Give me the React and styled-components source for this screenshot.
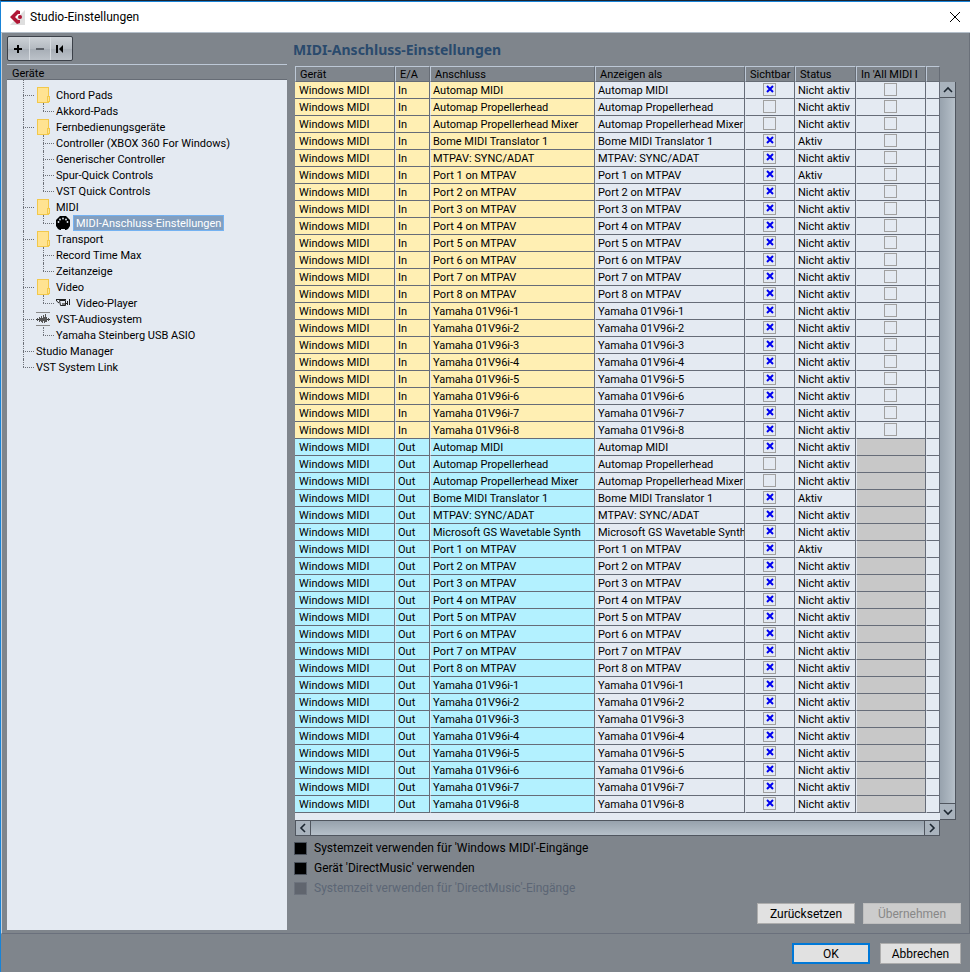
import React, { useState } from "react";
import styled, { createGlobalStyle, css } from "styled-components";

const GlobalStyle = createGlobalStyle`
    * {
        box-sizing: border-box;
    }

    body {
        margin: 0;
        font-family: Roboto, "Open Sans", sans-serif;
        font-size: 11px;
        color: #000;
        background: #7f858c;
    }
`;

const Window = styled.div`
    min-height: 100vh;
    display: flex;
    flex-direction: column;
    border-left: 1px solid #1883d7;
    border-top: 1px solid #1a2432;
    background: #7f858c;
`;

const TitleBar = styled.header`
    height: 32px;
    padding: 0 8px;
    display: flex;
    align-items: center;
    gap: 5px;
    background: #fff;
    border-top: 1px solid #1883d7;
    border-bottom: 1px solid #b4bfca;
`;

const WindowTitle = styled.h1`
    flex: 1;
    margin: 0;
    font-size: 12px;
    font-weight: 400;
`;

const CloseButton = styled.button`
    width: 14px;
    height: 14px;
    padding: 0;
    display: flex;
    align-items: center;
    justify-content: center;
    border: 0;
    background: none;
`;

const Main = styled.main`
    flex: 1;
    display: flex;
    gap: 6px;
    padding: 3px 8px 3px 5px;
    border-left: 1px solid #c3ccd6;
    border-right: 1px solid #6a7079;
    border-bottom: 1px solid #6a707c;
`;

const Sidebar = styled.section`
    width: 280px;
    flex: none;
    display: flex;
    flex-direction: column;
`;

const Toolbar = styled.div`
    width: 66px;
    height: 25px;
    margin-bottom: 3px;
    display: flex;
    border: 1px solid #3c4149;
    border-radius: 2px;
    background: linear-gradient(#cdd2d7, #b4bac1 50%, #a6adb5 51%, #bcc2c9);
`;

const ToolButton = styled.button`
    flex: 1;
    padding: 0;
    display: flex;
    align-items: center;
    justify-content: center;
    border: 0;
    background: none;

    & + & {
        border-left: 1px solid #d6dbe0;
    }
`;

const SidebarHeader = styled.h2`
    height: 16px;
    margin: 0;
    padding: 0 5px;
    font-size: 11px;
    font-weight: 400;
    line-height: 18px;
    border-top: 1px solid #bdc8d6;
    border-bottom: 1px solid #666c75;
`;

const Tree = styled.ul`
    flex: 1;
    margin: 0;
    padding: 7px 0 0 16px;
    list-style: none;
    background: #e4eaf2;
`;

const SubTree = styled.ul`
    margin: 0;
    padding: 0 0 0 20px;
    list-style: none;
`;

/* dotted guide lines: the vertical one stops at the row of the last child */
const TreeItem = styled.li`
    position: relative;

    &::before {
        content: "";
        position: absolute;
        left: 0;
        top: ${(props) => (props.$first ? "-7px" : "0")};
        height: ${(props) => (props.$last ? "8px" : "auto")};
        bottom: ${(props) => (props.$last ? "auto" : "0")};
        border-left: 1px dotted #6c7078;
    }
`;

const TreeRow = styled.div`
    height: 16px;
    display: flex;
    align-items: center;

    &::before {
        content: "";
        width: 11px;
        margin-right: 2px;
        border-top: 1px dotted #6c7078;
    }
`;

const IconSlot = styled.span`
    width: 20px;
    height: 16px;
    display: flex;
    align-items: center;
`;

const TreeLabel = styled.span`
    height: 16px;
    line-height: 18px;
    white-space: nowrap;
    ${(props) =>
        props.$selected &&
        css`
            margin-left: -3px;
            padding: 0 2px;
            line-height: 16px;
            color: #fff;
            background: #829fc0;
            border: 1px solid #74b2f2;
        `}
`;

const Content = styled.section`
    flex: 1;
    min-width: 0;
    display: flex;
    flex-direction: column;
`;

const PageTitle = styled.h2`
    height: 30px;
    margin: 0;
    padding-top: 2px;
    font-family: "Noto Sans", "Open Sans", sans-serif;
    font-size: 14px;
    line-height: 24px;
    font-weight: 700;
    color: #2a4a6c;
`;

const ListFrame = styled.div`
    display: grid;
    grid-template-columns: 1fr 16px;
    margin: 0 5px 0 2px;
`;

const ListBody = styled.div`
    padding-bottom: 7px;
    background: #e4eaf2;
    overflow: hidden;
`;

const Table = styled.table`
    width: 100%;
    table-layout: fixed;
    border-collapse: separate;
    border-spacing: 0;
`;

const HeadCell = styled.th`
    height: 16px;
    padding: 2px 0 0 4px;
    overflow: hidden;
    text-align: left;
    font-weight: 400;
    line-height: 12px;
    white-space: nowrap;
    background: #7f858c;
    border-top: 1px solid #bdc8d6;
    border-left: 1px solid #bdc8d6;
    border-right: 1px solid #666c75;
    border-bottom: 1px solid #666c75;
`;

const tones = { In: "#ffefb3", Out: "#b3f1ff", plain: "#e4eaf2", off: "#c8c8c8" };

const Cell = styled.td`
    height: 17px;
    padding: ${(props) => (props.$center ? "0 1px 0 0" : "2px 0 0 2px")};
    overflow: hidden;
    line-height: 14px;
    white-space: nowrap;
    text-align: ${(props) => (props.$center ? "center" : "left")};
    background: ${(props) => tones[props.$tone || "plain"]};
    border-left: 1px solid ${(props) => (props.$tone ? "#e4eaf2" : "transparent")};
    border-right: 1px solid #666c78;
    border-bottom: 1px solid #666c78;

    &:first-child {
        border-left: 0;
        padding-left: 4px;
    }
`;

const Box = styled.input`
    appearance: none;
    display: block;
    width: 13px;
    height: 13px;
    margin: 0 auto 2px;
    border: 1px solid #a0a0a0;
    background: #e4eaf2;
`;

const BoxWrap = styled.span`
    position: relative;
    display: block;

    svg {
        position: absolute;
        left: calc(50% - 4px);
        top: 2px;
        pointer-events: none;
    }
`;

const VScroll = styled.div`
    margin-top: 16px;
    display: flex;
    flex-direction: column;
    justify-content: space-between;
    background: linear-gradient(90deg, #97a2ad, #b6c0c9);
    border-right: 1px solid #50565f;
    border-bottom: 1px solid #50565f;
`;

const HScroll = styled.div`
    height: 16px;
    display: flex;
    justify-content: space-between;
    background: linear-gradient(#97a2ad, #b6c0c9);
    border: 1px solid #50565f;
`;

const ScrollButton = styled.button`
    width: 15px;
    height: ${(props) => (props.$side ? "14px" : "16px")};
    padding: 0;
    display: flex;
    align-items: center;
    justify-content: center;
    border: 0 solid #50565f;
    border-width: ${(props) => props.$edge};
    background: #a9b3bd;
`;

const Options = styled.div`
    padding: 2px 0 0 1px;
    display: flex;
    flex-direction: column;
`;

const Option = styled.label`
    height: 20px;
    display: flex;
    align-items: center;
    gap: 7px;
    font-size: 12px;
    color: ${(props) => (props.$disabled ? "#5c6675" : "#000")};
`;

const OptionBox = styled.input`
    appearance: none;
    width: 13px;
    height: 13px;
    margin: 0;
    border: 1px solid #4b525c;
    background: #000;

    &:disabled {
        border-color: #6d737d;
        background: #60656e;
    }
`;

const Actions = styled.div`
    margin-top: auto;
    padding-bottom: 6px;
    display: flex;
    justify-content: flex-end;
    gap: 8px;
`;

const Footer = styled.footer`
    height: 38px;
    padding: 9px 9px 0;
    display: flex;
    justify-content: flex-end;
    gap: 10px;
`;

const PushButton = styled.button`
    width: ${(props) => props.$width}px;
    height: 21px;
    padding: 2px 0 0;
    font: 12px/15px Roboto, "Open Sans", sans-serif;
    color: #000;
    background: #e1e1e1;
    border: ${(props) => (props.$primary ? "2px solid #0078d7" : "1px solid #adadad")};

    &:disabled {
        color: #888;
        background: #ccc;
        border-color: #bfbfbf;
    }
`;

function LogoIcon() {
    return (
        <svg width="16" height="16" viewBox="0 0 16 16">
            <path d="M1 16L16 1V16Z" fill="#dedede" />
            <path d="M1 8L8 1L11 2V5H9L6 8L9 11H11V14L8 15Z" fill="#b01635" />
            <circle cx="11" cy="8" r="2" fill="#b01635" />
        </svg>
    );
}

function FolderIcon() {
    return (
        <svg width="14" height="16" viewBox="0 0 14 16">
            <rect x="1.5" y=".5" width="11" height="15" fill="#ffe391" stroke="#f2c84b" />
            <rect x="11.5" y="9.5" width="2" height="5" fill="#ffe391" stroke="#f2c84b" />
        </svg>
    );
}

function MidiIcon() {
    return (
        <svg width="14" height="14" viewBox="0 0 14 14">
            <path d="M4 0H10L14 4V10L12 13L10 14H9V13H5V14H4L2 13L0 10V4Z" fill="#000" />
            <g fill="#e4eaf2">
                <circle cx="2.5" cy="6" r=".9" />
                <circle cx="4" cy="3.5" r=".9" />
                <circle cx="7" cy="2.5" r=".9" />
                <circle cx="10" cy="3.5" r=".9" />
                <circle cx="11.5" cy="6" r=".9" />
            </g>
        </svg>
    );
}

function CameraIcon() {
    return (
        <svg width="14" height="10" viewBox="0 0 14 10">
            <path d="M0 1.5H4M.5 1V3L3 5" fill="none" stroke="#222" />
            <path d="M3.5 2.5H9.5V7.5H4.5ZM4 1.5H10M10 5.5H11M11.5 3V7M13.5 1V7" fill="none" stroke="#222" />
            <path d="M6 5H9V7H6Z" fill="#777" />
        </svg>
    );
}

function WaveIcon() {
    return (
        <svg width="14" height="14" viewBox="0 0 14 14" stroke="#555">
            <path d="M0 .5H14M0 13.5H14" stroke="#888" />
            <path d="M0 7.5H14" stroke="#333" />
            <path d="M1.5 6V9M3.5 5V10M4.5 6V9M5.5 4V10M6.5 6V11M7.5 3V9M8.5 5V11M9.5 2V10M10.5 5V10M12.5 6V9" />
        </svg>
    );
}

function CheckMark() {
    return (
        <svg width="8" height="8" viewBox="0 0 8 8">
            <path d="M1 1L7 7M7 1L1 7" stroke="#0000f0" strokeWidth="2" />
        </svg>
    );
}

function Chevron({ d }) {
    return (
        <svg width="10" height="10" viewBox="0 0 10 10">
            <path d={d} fill="none" stroke="#1c2630" strokeWidth="1.6" />
        </svg>
    );
}

const icons = { folder: FolderIcon, midi: MidiIcon, camera: CameraIcon, wave: WaveIcon };

const devices = [
    { label: "Chord Pads", icon: "folder", children: [{ label: "Akkord-Pads" }] },
    {
        label: "Fernbedienungsgeräte",
        icon: "folder",
        children: [
            { label: "Controller (XBOX 360 For Windows)" },
            { label: "Generischer Controller" },
            { label: "Spur-Quick Controls" },
            { label: "VST Quick Controls" },
        ],
    },
    {
        label: "MIDI",
        icon: "folder",
        children: [{ label: "MIDI-Anschluss-Einstellungen", icon: "midi", selected: true }],
    },
    {
        label: "Transport",
        icon: "folder",
        children: [{ label: "Record Time Max" }, { label: "Zeitanzeige" }],
    },
    { label: "Video", icon: "folder", children: [{ label: "Video-Player", icon: "camera" }] },
    { label: "VST-Audiosystem", icon: "wave", children: [{ label: "Yamaha Steinberg USB ASIO" }] },
    { label: "Studio Manager" },
    { label: "VST System Link" },
];

const numbered = (count, name) => Array.from({ length: count }, (_, i) => name(i + 1));

const firstPorts = [
    "Automap MIDI",
    "Automap Propellerhead",
    "Automap Propellerhead Mixer",
    "Bome MIDI Translator 1",
    "MTPAV: SYNC/ADAT",
];
const lastPorts = [
    ...numbered(8, (n) => `Port ${n} on MTPAV`),
    ...numbered(8, (n) => `Yamaha 01V96i-${n}`),
];
const hidden = ["Automap Propellerhead", "Automap Propellerhead Mixer"];
const active = ["Bome MIDI Translator 1", "Port 1 on MTPAV"];

const toRow = (direction) => (name) => ({
    id: direction + name,
    direction,
    name,
    visible: !hidden.includes(name),
    status: active.includes(name) ? "Aktiv" : "Nicht aktiv",
});

const ports = [
    ...[...firstPorts, ...lastPorts].map(toRow("In")),
    ...[...firstPorts, "Microsoft GS Wavetable Synth", ...lastPorts].map(toRow("Out")),
];

const columns = [
    { title: "Gerät", width: 100 },
    { title: "E/A", width: 35 },
    { title: "Anschluss", width: 165 },
    { title: "Anzeigen als", width: 150 },
    { title: "Sichtbar", width: 50 },
    { title: "Status", width: 61 },
    { title: "In 'All MIDI I", width: 70 },
    { title: "" },
];

function TreeNode({ node, first, last }) {
    const Icon = icons[node.icon];
    return (
        <TreeItem $first={first} $last={last}>
            <TreeRow>
                {Icon && (
                    <IconSlot>
                        <Icon />
                    </IconSlot>
                )}
                <TreeLabel $selected={node.selected}>{node.label}</TreeLabel>
            </TreeRow>
            {node.children && (
                <SubTree>
                    {node.children.map((child, i) => (
                        <TreeNode key={child.label} node={child} last={i === node.children.length - 1} />
                    ))}
                </SubTree>
            )}
        </TreeItem>
    );
}

function TickBox({ label, checked, onChange }) {
    return (
        <BoxWrap>
            <Box type="checkbox" aria-label={label} checked={checked} onChange={onChange} />
            {checked && <CheckMark />}
        </BoxWrap>
    );
}

function PortRow({ port }) {
    const [visible, setVisible] = useState(port.visible);
    const [allInputs, setAllInputs] = useState(false);
    return (
        <tr>
            <Cell $tone={port.direction}>Windows MIDI</Cell>
            <Cell $tone={port.direction}>{port.direction}</Cell>
            <Cell $tone={port.direction}>{port.name}</Cell>
            <Cell>{port.name}</Cell>
            <Cell $center>
                <TickBox label="Sichtbar" checked={visible} onChange={() => setVisible(!visible)} />
            </Cell>
            <Cell>{port.status}</Cell>
            <Cell $center $tone={port.direction === "Out" ? "off" : undefined}>
                {port.direction === "In" && (
                    <TickBox
                        label="In 'All MIDI Inputs'"
                        checked={allInputs}
                        onChange={() => setAllInputs(!allInputs)}
                    />
                )}
            </Cell>
            <Cell />
        </tr>
    );
}

function App() {
    return (
        <>
            <GlobalStyle />
            <Window>
                <TitleBar>
                    <LogoIcon />
                    <WindowTitle>Studio-Einstellungen</WindowTitle>
                    <CloseButton aria-label="Schließen">
                        <svg width="12" height="12" viewBox="0 0 12 12">
                            <path d="M1 1L11 11M11 1L1 11" stroke="#000" />
                        </svg>
                    </CloseButton>
                </TitleBar>
                <Main>
                    <Sidebar>
                        <Toolbar>
                            <ToolButton aria-label="Hinzufügen">
                                <svg width="8" height="8" viewBox="0 0 8 8">
                                    <path d="M4 0V8M0 4H8" stroke="#000" strokeWidth="2" />
                                </svg>
                            </ToolButton>
                            <ToolButton aria-label="Entfernen">
                                <svg width="8" height="8" viewBox="0 0 8 8">
                                    <path d="M0 4H8" stroke="#5b6067" strokeWidth="2" />
                                </svg>
                            </ToolButton>
                            <ToolButton aria-label="Zurücksetzen">
                                <svg width="12" height="8" viewBox="0 0 12 8">
                                    <path d="M0 0H2V8H0ZM7 0V8L3 4Z" fill="#000" />
                                </svg>
                            </ToolButton>
                        </Toolbar>
                        <SidebarHeader>Geräte</SidebarHeader>
                        <Tree>
                            {devices.map((node, i) => (
                                <TreeNode
                                    key={node.label}
                                    node={node}
                                    first={i === 0}
                                    last={i === devices.length - 1}
                                />
                            ))}
                        </Tree>
                    </Sidebar>
                    <Content>
                        <PageTitle>MIDI-Anschluss-Einstellungen</PageTitle>
                        <ListFrame>
                            <ListBody>
                                <Table>
                                    <colgroup>
                                        {columns.map((col) => (
                                            <col key={col.title} width={col.width} />
                                        ))}
                                    </colgroup>
                                    <thead>
                                        <tr>
                                            {columns.map((col) => (
                                                <HeadCell key={col.title}>{col.title}</HeadCell>
                                            ))}
                                        </tr>
                                    </thead>
                                    <tbody>
                                        {ports.map((port) => (
                                            <PortRow key={port.id} port={port} />
                                        ))}
                                    </tbody>
                                </Table>
                            </ListBody>
                            <VScroll>
                                <ScrollButton aria-label="Nach oben" $edge="0 0 1px">
                                    <Chevron d="M1 7L5 3L9 7" />
                                </ScrollButton>
                                <ScrollButton aria-label="Nach unten" $edge="1px 0 0">
                                    <Chevron d="M1 3L5 7L9 3" />
                                </ScrollButton>
                            </VScroll>
                            <HScroll>
                                <ScrollButton aria-label="Nach links" $side $edge="0 1px 0 0">
                                    <Chevron d="M7 1L3 5L7 9" />
                                </ScrollButton>
                                <ScrollButton aria-label="Nach rechts" $side $edge="0 0 0 1px">
                                    <Chevron d="M3 1L7 5L3 9" />
                                </ScrollButton>
                            </HScroll>
                        </ListFrame>
                        <Options>
                            <Option>
                                <OptionBox type="checkbox" />
                                Systemzeit verwenden für 'Windows MIDI'-Eingänge
                            </Option>
                            <Option>
                                <OptionBox type="checkbox" />
                                Gerät 'DirectMusic' verwenden
                            </Option>
                            <Option $disabled>
                                <OptionBox type="checkbox" disabled />
                                Systemzeit verwenden für 'DirectMusic'-Eingänge
                            </Option>
                        </Options>
                        <Actions>
                            <PushButton $width={98}>Zurücksetzen</PushButton>
                            <PushButton $width={98} disabled>
                                Übernehmen
                            </PushButton>
                        </Actions>
                    </Content>
                </Main>
                <Footer>
                    <PushButton $width={78} $primary>
                        OK
                    </PushButton>
                    <PushButton $width={81}>Abbrechen</PushButton>
                </Footer>
            </Window>
        </>
    );
}

export default App;
